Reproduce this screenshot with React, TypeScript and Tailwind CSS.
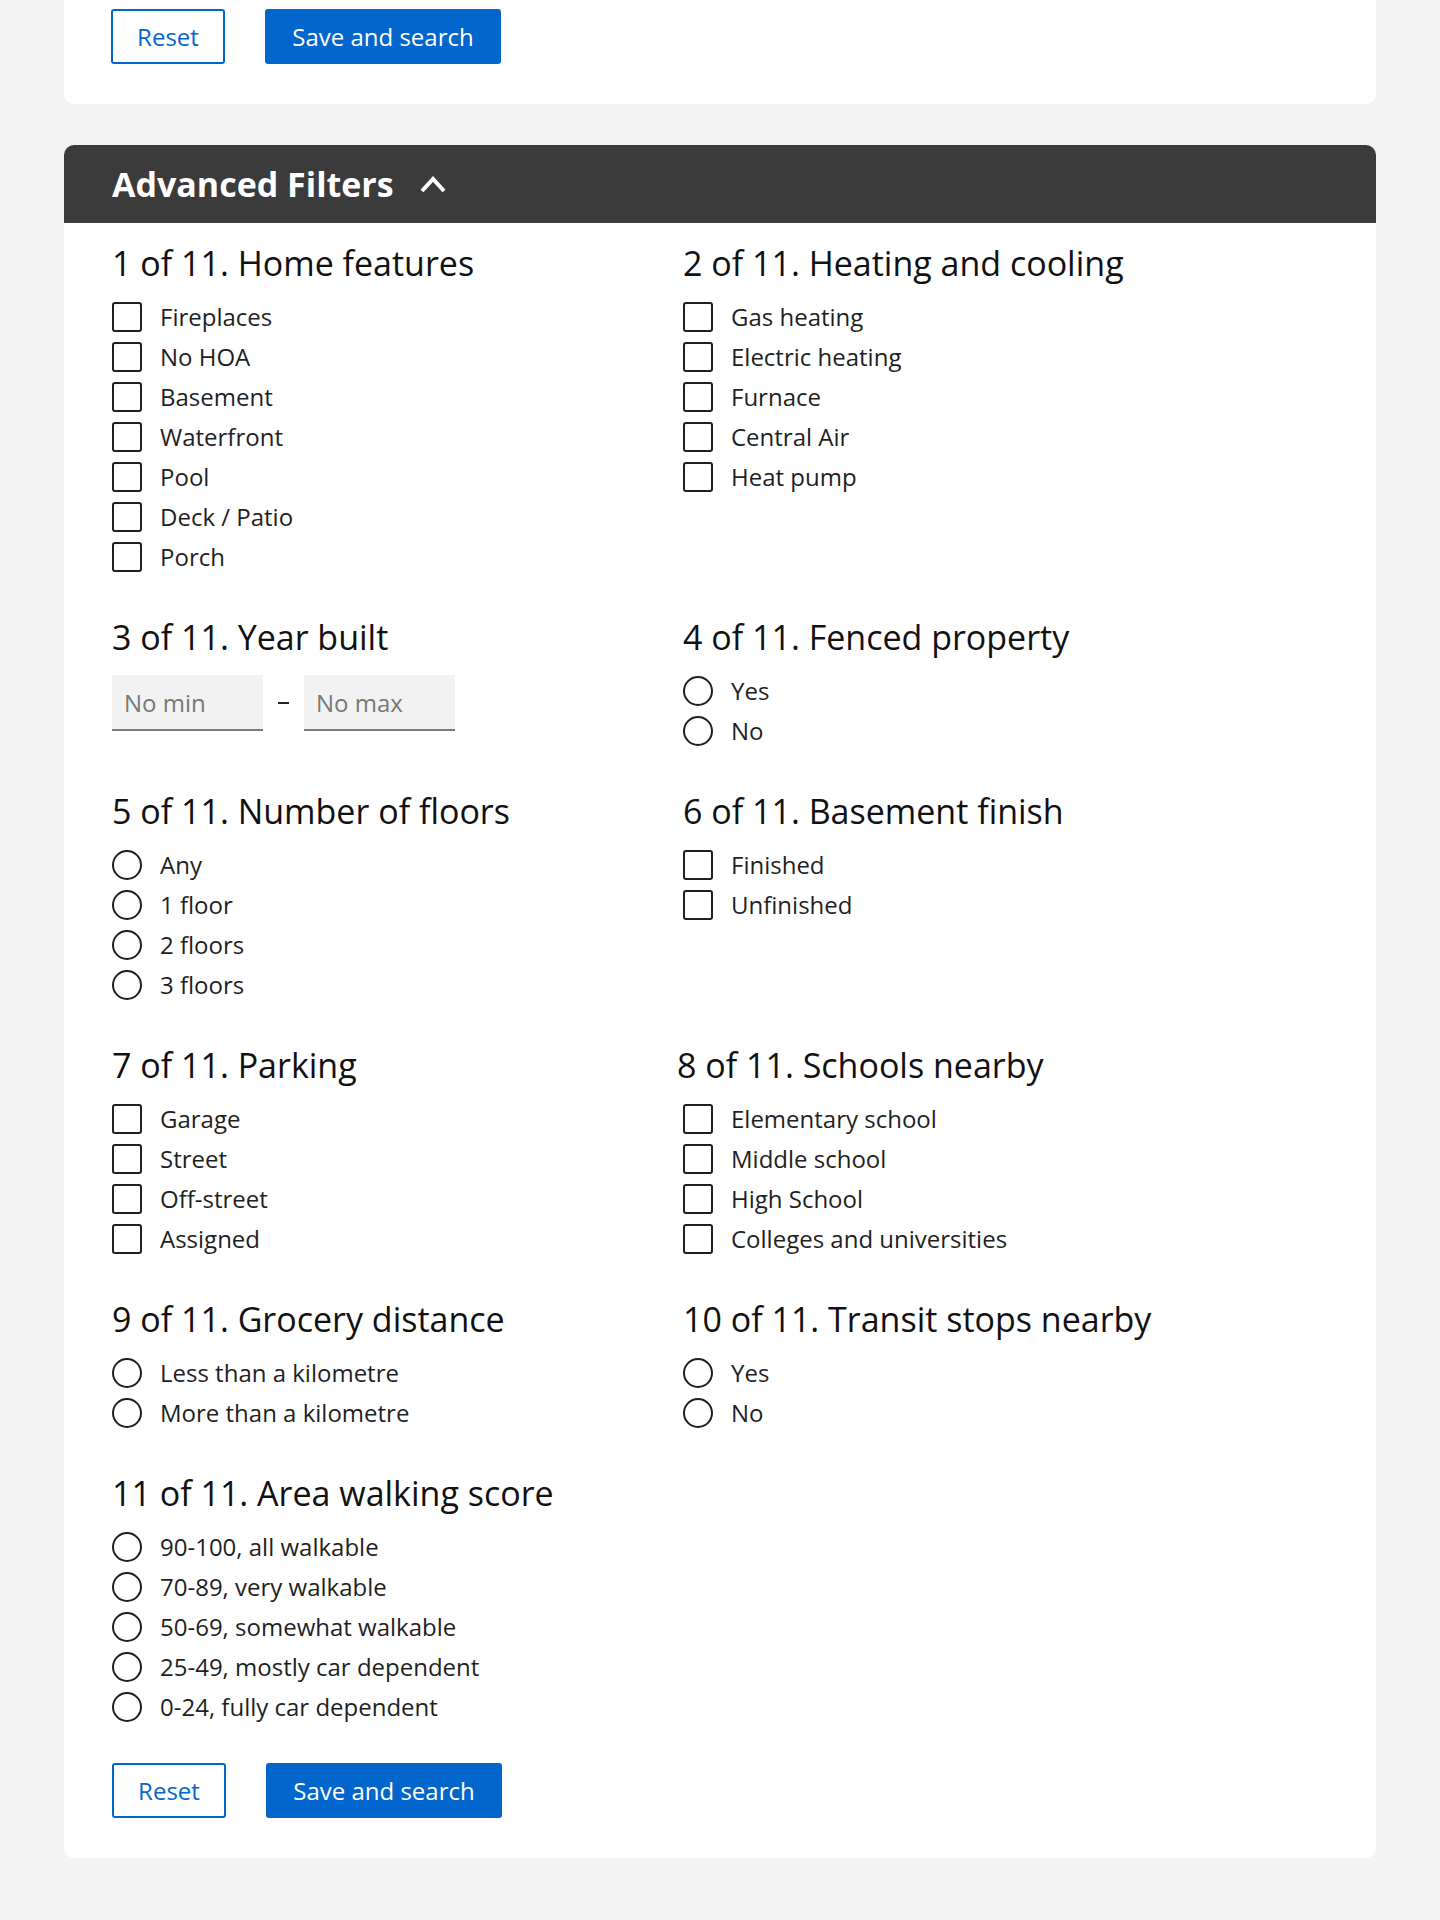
import React from "react";

type Section = {
  title: string;
  kind: "check" | "radio" | "range";
  options?: string[];
  shift?: boolean;
};

const sections: Section[] = [
  { title: "1 of 11. Home features", kind: "check", options: ["Fireplaces", "No HOA", "Basement", "Waterfront", "Pool", "Deck / Patio", "Porch"] },
  { title: "2 of 11. Heating and cooling", kind: "check", options: ["Gas heating", "Electric heating", "Furnace", "Central Air", "Heat pump"] },
  { title: "3 of 11. Year built", kind: "range" },
  { title: "4 of 11. Fenced property", kind: "radio", options: ["Yes", "No"] },
  { title: "5 of 11. Number of floors", kind: "radio", options: ["Any", "1 floor", "2 floors", "3 floors"] },
  { title: "6 of 11. Basement finish", kind: "check", options: ["Finished", "Unfinished"] },
  { title: "7 of 11. Parking", kind: "check", options: ["Garage", "Street", "Off-street", "Assigned"] },
  { title: "8 of 11. Schools nearby", kind: "check", options: ["Elementary school", "Middle school", "High School", "Colleges and universities"], shift: true },
  { title: "9 of 11. Grocery distance", kind: "radio", options: ["Less than a kilometre", "More than a kilometre"] },
  { title: "10 of 11. Transit stops nearby", kind: "radio", options: ["Yes", "No"] },
  { title: "11 of 11. Area walking score", kind: "radio", options: ["90-100, all walkable", "70-89, very walkable", "50-69, somewhat walkable", "25-49, mostly car dependent", "0-24, fully car dependent"] },
];

function Buttons() {
  return (
    <div className="flex items-center gap-[40px]">
      <button className="h-[55px] w-[114px] rounded-[3px] border-2 border-[#0366cc] bg-white text-[24px] font-medium text-[#0366cc]">
        Reset
      </button>
      <button className="h-[55px] w-[236px] rounded-[3px] bg-[#0366cc] text-[24px] font-medium text-white">
        Save and search
      </button>
    </div>
  );
}

function Option({ label, kind }: { label: string; kind: "check" | "radio" }) {
  return (
    <label className="flex h-[40px] items-center gap-[18px]">
      <span
        className={`h-[30px] w-[30px] shrink-0 border-2 border-[#1f1f1f] bg-white ${kind === "radio" ? "rounded-full" : "rounded-[3px]"}`}
      />
      <span className="text-[24px] leading-[40px] text-[#1f1f1f]">{label}</span>
    </label>
  );
}

function FilterSection({ s }: { s: Section }) {
  return (
    <section>
      <h3 className={`text-[34px] leading-[48px] text-[#111] ${s.shift ? "-ml-[6px]" : ""}`}>{s.title}</h3>
      {s.kind === "range" ? (
        <div className="mt-[14px] flex items-center">
          <div className="flex h-[56px] w-[151px] items-center border-b-2 border-[#7b7b7b] bg-[#f2f2f2] px-[12px] pt-[2px] text-[24px] text-[#777]">
            No min
          </div>
          <div className="flex w-[41px] justify-center">
            <span className="h-[2px] w-[11px] bg-[#222]" />
          </div>
          <div className="flex h-[56px] w-[151px] items-center border-b-2 border-[#7b7b7b] bg-[#f2f2f2] px-[12px] pt-[2px] text-[24px] text-[#777]">
            No max
          </div>
        </div>
      ) : (
        <div className="mt-[10px] flex flex-col">
          {s.options!.map((o) => (
            <Option key={o} label={o} kind={s.kind as "check" | "radio"} />
          ))}
        </div>
      )}
    </section>
  );
}

export default function App() {
  return (
    <div className="min-h-[1920px] bg-[#f4f4f4] px-[64px] pb-[62px]" style={{ fontFamily: '"Open Sans", "Noto Sans", sans-serif' }}>
      {/* Top actions card */}
      <div className="rounded-b-[10px] bg-white px-[47px] pb-[40px] pt-[9px]">
        <Buttons />
      </div>

      {/* Advanced filters */}
      <div className="mt-[41px]">
        <div className="flex h-[78px] items-center gap-[26px] rounded-t-[10px] bg-[#3b3b3b] px-[48px]">
          <h2 className="text-[34px] font-bold text-white">Advanced Filters</h2>
          <svg width="26" height="18" viewBox="0 0 26 18" fill="none" stroke="white" strokeWidth="4">
            <polyline points="2,16 13,4 24,16" />
          </svg>
        </div>
        <div className="rounded-b-[10px] bg-white px-[48px] pb-[40px] pt-[16px]">
          <div className="grid grid-cols-[571px_1fr] gap-y-[36px]">
            {sections.map((s) => (
              <FilterSection key={s.title} s={s} />
            ))}
          </div>
          <div className="mt-[36px]">
            <Buttons />
          </div>
        </div>
      </div>
    </div>
  );
}
